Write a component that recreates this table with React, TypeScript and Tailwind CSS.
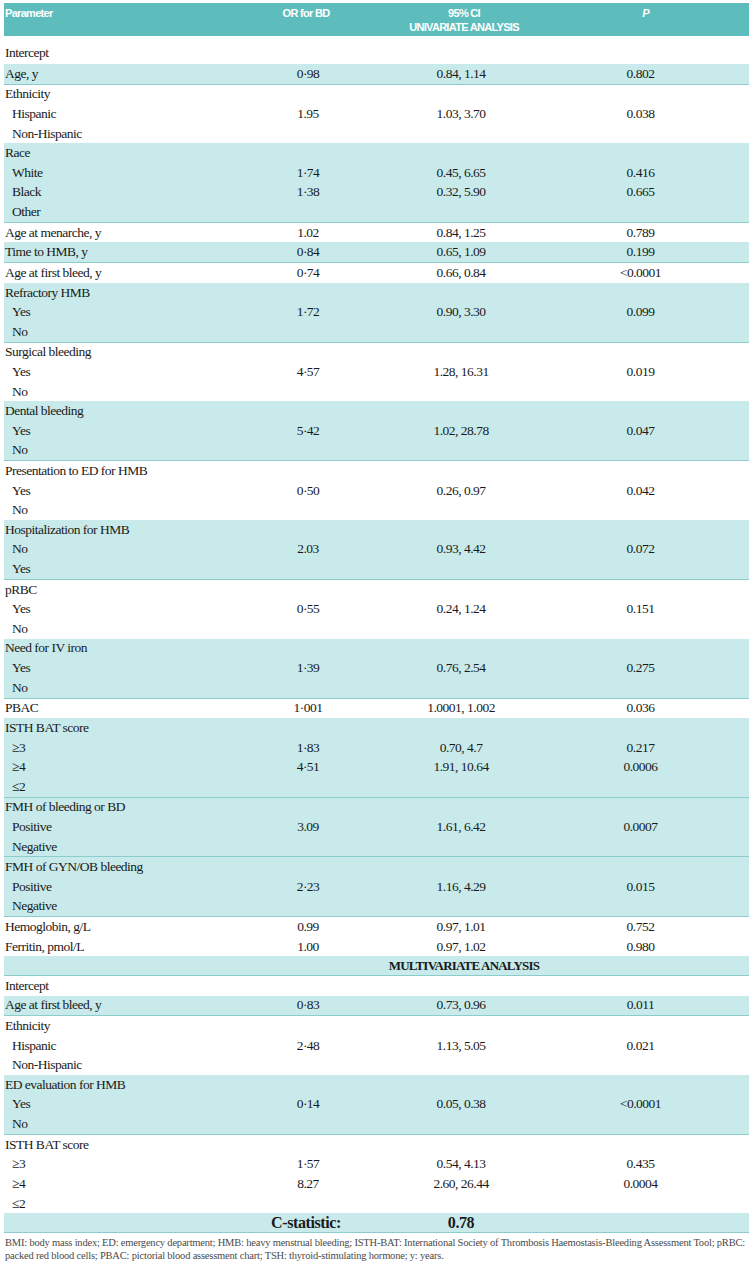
type Row = {
  label: string;
  sub?: boolean;
  or?: string;
  ci?: string;
  p?: string;
};

type Group = {
  shade: boolean;
  rows: Row[];
};

const univariate: Group[] = [
  { shade: true, rows: [{ label: "Age, y", or: "0·98", ci: "0.84, 1.14", p: "0.802" }] },
  {
    shade: false,
    rows: [
      { label: "Ethnicity" },
      { label: "Hispanic", sub: true, or: "1.95", ci: "1.03, 3.70", p: "0.038" },
      { label: "Non-Hispanic", sub: true },
    ],
  },
  {
    shade: true,
    rows: [
      { label: "Race" },
      { label: "White", sub: true, or: "1·74", ci: "0.45, 6.65", p: "0.416" },
      { label: "Black", sub: true, or: "1·38", ci: "0.32, 5.90", p: "0.665" },
      { label: "Other", sub: true },
    ],
  },
  { shade: false, rows: [{ label: "Age at menarche, y", or: "1.02", ci: "0.84, 1.25", p: "0.789" }] },
  { shade: true, rows: [{ label: "Time to HMB, y", or: "0·84", ci: "0.65, 1.09", p: "0.199" }] },
  { shade: false, rows: [{ label: "Age at first bleed, y", or: "0·74", ci: "0.66, 0.84", p: "<0.0001" }] },
  {
    shade: true,
    rows: [
      { label: "Refractory HMB" },
      { label: "Yes", sub: true, or: "1·72", ci: "0.90, 3.30", p: "0.099" },
      { label: "No", sub: true },
    ],
  },
  {
    shade: false,
    rows: [
      { label: "Surgical bleeding" },
      { label: "Yes", sub: true, or: "4·57", ci: "1.28, 16.31", p: "0.019" },
      { label: "No", sub: true },
    ],
  },
  {
    shade: true,
    rows: [
      { label: "Dental bleeding" },
      { label: "Yes", sub: true, or: "5·42", ci: "1.02, 28.78", p: "0.047" },
      { label: "No", sub: true },
    ],
  },
  {
    shade: false,
    rows: [
      { label: "Presentation to ED for HMB" },
      { label: "Yes", sub: true, or: "0·50", ci: "0.26, 0.97", p: "0.042" },
      { label: "No", sub: true },
    ],
  },
  {
    shade: true,
    rows: [
      { label: "Hospitalization for HMB" },
      { label: "No", sub: true, or: "2.03", ci: "0.93, 4.42", p: "0.072" },
      { label: "Yes", sub: true },
    ],
  },
  {
    shade: false,
    rows: [
      { label: "pRBC" },
      { label: "Yes", sub: true, or: "0·55", ci: "0.24, 1.24", p: "0.151" },
      { label: "No", sub: true },
    ],
  },
  {
    shade: true,
    rows: [
      { label: "Need for IV iron" },
      { label: "Yes", sub: true, or: "1·39", ci: "0.76, 2.54", p: "0.275" },
      { label: "No", sub: true },
    ],
  },
  { shade: false, rows: [{ label: "PBAC", or: "1·001", ci: "1.0001, 1.002", p: "0.036" }] },
  {
    shade: true,
    rows: [
      { label: "ISTH BAT score" },
      { label: "≥3", sub: true, or: "1·83", ci: "0.70, 4.7", p: "0.217" },
      { label: "≥4", sub: true, or: "4·51", ci: "1.91, 10.64", p: "0.0006" },
      { label: "≤2", sub: true },
    ],
  },
  {
    shade: true,
    rows: [
      { label: "FMH of bleeding or BD" },
      { label: "Positive", sub: true, or: "3.09", ci: "1.61, 6.42", p: "0.0007" },
      { label: "Negative", sub: true },
    ],
  },
  {
    shade: true,
    rows: [
      { label: "FMH of GYN/OB bleeding" },
      { label: "Positive", sub: true, or: "2·23", ci: "1.16, 4.29", p: "0.015" },
      { label: "Negative", sub: true },
    ],
  },
  {
    shade: false,
    rows: [
      { label: "Hemoglobin, g/L", or: "0.99", ci: "0.97, 1.01", p: "0.752" },
      { label: "Ferritin, pmol/L", or: "1.00", ci: "0.97, 1.02", p: "0.980" },
    ],
  },
];

const multivariate: Group[] = [
  { shade: false, rows: [{ label: "Intercept" }] },
  { shade: true, rows: [{ label: "Age at first bleed, y", or: "0·83", ci: "0.73, 0.96", p: "0.011" }] },
  {
    shade: false,
    rows: [
      { label: "Ethnicity" },
      { label: "Hispanic", sub: true, or: "2·48", ci: "1.13, 5.05", p: "0.021" },
      { label: "Non-Hispanic", sub: true },
    ],
  },
  {
    shade: true,
    rows: [
      { label: "ED evaluation for HMB" },
      { label: "Yes", sub: true, or: "0·14", ci: "0.05, 0.38", p: "<0.0001" },
      { label: "No", sub: true },
    ],
  },
  {
    shade: false,
    rows: [
      { label: "ISTH BAT score" },
      { label: "≥3", sub: true, or: "1·57", ci: "0.54, 4.13", p: "0.435" },
      { label: "≥4", sub: true, or: "8.27", ci: "2.60, 26.44", p: "0.0004" },
      { label: "≤2", sub: true },
    ],
  },
];

const cols = "grid grid-cols-[222px_160px_156px_207px]";

const GroupRows = ({ group }: { group: Group }) => (
  <div className={group.shade ? "bg-[#c8eaea] border-b border-[#8ccccc]" : "bg-white"}>
    {group.rows.map((row, i) => (
      <div key={i} className={`${cols} h-[19.62px] items-center`}>
        <div className={row.sub ? "pl-[8px]" : "pl-[1px]"}>{row.label}</div>
        <div className="text-center pl-[4px]">{row.or}</div>
        <div className="text-center pr-[6px]">{row.ci}</div>
        <div className="text-center pr-[10px]">{row.p}</div>
      </div>
    ))}
  </div>
);

export default function App() {
  return (
    <div className="w-[754px] h-[1280px] bg-white pt-[3px] px-[4px]">
      <div className="w-[745px] font-['Liberation_Serif',serif] text-[13.5px] leading-[16px] tracking-[-0.5px] text-[#1a1a1a]">
        <div
          className={`${cols} h-[33px] bg-[#5dbdbd] text-white font-bold text-[11px] leading-[14px] tracking-[-0.7px] font-['Liberation_Sans',sans-serif] pt-[3px]`}
        >
          <div className="pl-[1px]">Parameter</div>
          <div className="text-center">OR for BD</div>
          <div className="text-center">
            95% CI
            <br />
            UNIVARIATE ANALYSIS
          </div>
          <div className="text-center italic">P</div>
        </div>

        <div className={`${cols} h-[28px] items-center pt-[6px]`}>
          <div className="pl-[1px]">Intercept</div>
        </div>
        {univariate.map((g, i) => (
          <GroupRows key={i} group={g} />
        ))}

        <div className={`${cols} h-[19.62px] items-center bg-[#c8eaea] border-b border-[#8ccccc]`}>
          <div />
          <div />
          <div className="text-center font-bold text-[13px] tracking-[-0.8px] whitespace-nowrap">MULTIVARIATE ANALYSIS</div>
          <div />
        </div>
        {multivariate.map((g, i) => (
          <GroupRows key={i} group={g} />
        ))}

        <div className={`${cols} h-[19.62px] items-center bg-[#c8eaea] border-b border-[#8ccccc] font-bold text-[16px] tracking-[-0.4px]`}>
          <div />
          <div className="text-center">C-statistic:</div>
          <div className="text-center pr-[6px]">0.78</div>
          <div />
        </div>

        <p className="pt-[3px] pl-[1px] text-[10.5px] leading-[13px] tracking-[-0.2px] text-[#4a4a4a]">
          BMI: body mass index; ED: emergency department; HMB: heavy menstrual bleeding; ISTH-BAT: International Society
          of Thrombosis Haemostasis-Bleeding Assessment Tool; pRBC: packed red blood cells; PBAC: pictorial blood
          assessment chart; TSH: thyroid-stimulating hormone; y: years.
        </p>
      </div>
    </div>
  );
}
